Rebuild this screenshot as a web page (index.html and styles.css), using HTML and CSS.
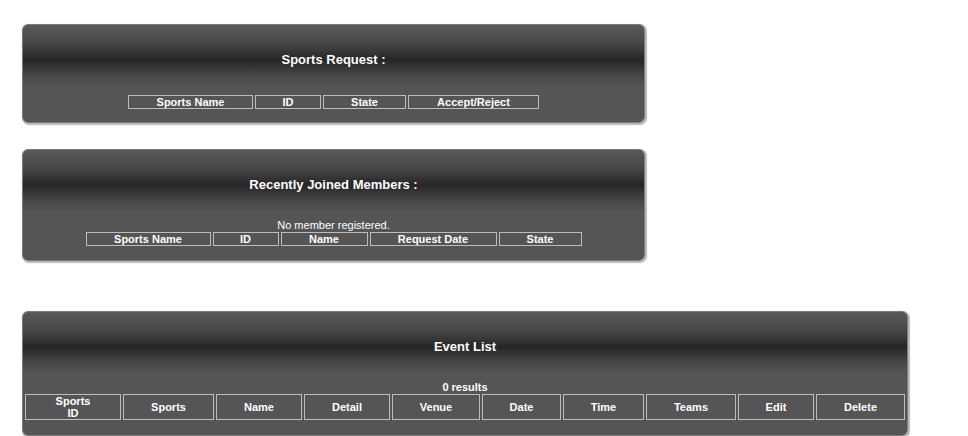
FILE: index.html
```html
<!DOCTYPE html>
<html>
<head>
<meta charset="utf-8">
<title>Sports Admin</title>
<link rel="stylesheet" href="styles.css">
</head>
<body>
<div class="page">
  <section class="panel panel-narrow panel-first">
    <h3 class="title">Sports Request :</h3>
    <table class="grid grid-requests">
      <tr><th>Sports Name</th><th>ID</th><th>State</th><th>Accept/Reject</th></tr>
    </table>
  </section>

  <section class="panel panel-narrow panel-members">
    <h3 class="title">Recently Joined Members :</h3>
    <p class="msg">No member registered.</p>
    <table class="grid grid-members">
      <tr><th>Sports Name</th><th>ID</th><th>Name</th><th>Request Date</th><th>State</th></tr>
    </table>
  </section>

  <section class="panel panel-wide panel-events">
    <h3 class="title">Event List</h3>
    <p class="msg msg-bold">0 results</p>
    <table class="grid grid-events">
      <tr><th>Sports<br>ID</th><th>Sports</th><th>Name</th><th>Detail</th><th>Venue</th><th>Date</th><th>Time</th><th>Teams</th><th>Edit</th><th>Delete</th></tr>
    </table>
  </section>
</div>
</body>
</html>
```

FILE: styles.css
```css
html, body {
  margin: 0;
  padding: 0;
  background: #ffffff;
}

body {
  margin: 8px;
  font-family: "Liberation Sans", Arial, sans-serif;
}

.page {
  padding: 16px 14px 0 14px;
}

.panel {
  box-sizing: border-box;
  display: flex;
  flex-direction: column;
  border: 1px solid #7a7a7a;
  border-radius: 6px;
  box-shadow: 1px 1px 1px 1px #b8b8b8;
  background: linear-gradient(to bottom,
    #595959 0px,
    #484848 18px,
    #262626 35px,
    #464646 50px,
    #555555 62px,
    #555555 100%);
  padding: 27px 0 11px 0;
  color: #ffffff;
}

.panel-narrow {
  width: 623px;
}

.panel-wide {
  width: 886px;
}

.panel-members {
  margin-top: 26px;
  padding-bottom: 12px;
}

.panel-events {
  margin-top: 50px;
  padding-bottom: 13px;
}

.title {
  margin: 0 0 25px 0;
  font-size: 13px;
  line-height: 16px;
  font-weight: bold;
  text-align: center;
  color: #ffffff;
}

.msg {
  margin: 1px 0 -1px 0;
  font-size: 11px;
  line-height: 12px;
  text-align: center;
  color: #ffffff;
}

.msg-bold {
  font-weight: bold;
}

.grid {
  border-collapse: separate;
  border-spacing: 2px;
  margin: 0 auto;
}

.grid th {
  border: 1px solid #bdbdbd;
  padding: 0;
  font-size: 11px;
  line-height: 12px;
  font-weight: bold;
  color: #ffffff;
  text-align: center;
  vertical-align: middle;
}

.grid-requests th:nth-child(1) { width: 123px; }
.grid-requests th:nth-child(2) { width: 64px; }
.grid-requests th:nth-child(3) { width: 81px; }
.grid-requests th:nth-child(4) { width: 129px; }

.grid-members th:nth-child(1) { width: 123px; }
.grid-members th:nth-child(2) { width: 64px; }
.grid-members th:nth-child(3) { width: 85px; }
.grid-members th:nth-child(4) { width: 125px; }
.grid-members th:nth-child(5) { width: 81px; }

.grid-events {
  width: 100%;
}

.grid-events th:nth-child(1) { width: 94px; }
.grid-events th:nth-child(2) { width: 89px; }
.grid-events th:nth-child(3) { width: 84px; }
.grid-events th:nth-child(4) { width: 84px; }
.grid-events th:nth-child(5) { width: 86px; }
.grid-events th:nth-child(6) { width: 77px; }
.grid-events th:nth-child(7) { width: 79px; }
.grid-events th:nth-child(8) { width: 88px; }
.grid-events th:nth-child(9) { width: 74px; }
.grid-events th:nth-child(10) { width: 87px; }
```
